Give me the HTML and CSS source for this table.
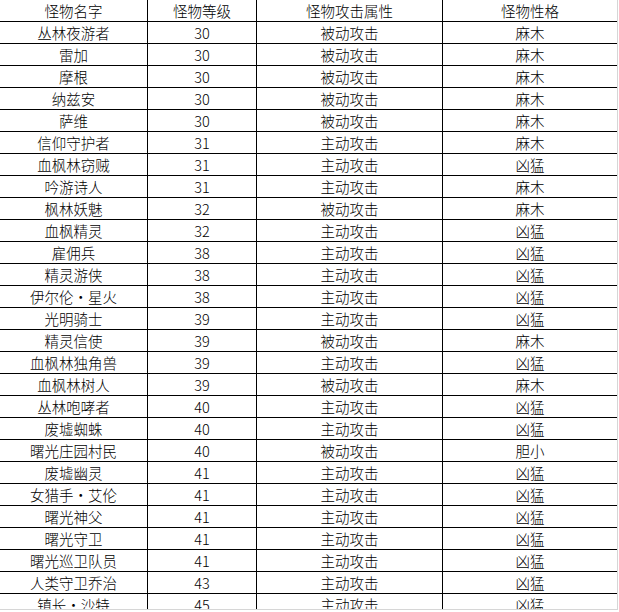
FILE: index.html
```html
<!DOCTYPE html>
<html lang="zh-CN">
<head>
<meta charset="utf-8">
<title>怪物列表</title>
<link rel="stylesheet" href="styles.css">
</head>
<body>
<div class="frame">
  <div class="grid">
    <div class="c">怪物名字</div><div class="c">怪物等级</div><div class="c">怪物攻击属性</div><div class="c last">怪物性格</div>
    <div class="c">丛林夜游者</div><div class="c">30</div><div class="c">被动攻击</div><div class="c last">麻木</div>
    <div class="c">雷加</div><div class="c">30</div><div class="c">被动攻击</div><div class="c last">麻木</div>
    <div class="c">摩根</div><div class="c">30</div><div class="c">被动攻击</div><div class="c last">麻木</div>
    <div class="c">纳兹安</div><div class="c">30</div><div class="c">被动攻击</div><div class="c last">麻木</div>
    <div class="c">萨维</div><div class="c">30</div><div class="c">被动攻击</div><div class="c last">麻木</div>
    <div class="c">信仰守护者</div><div class="c">31</div><div class="c">主动攻击</div><div class="c last">麻木</div>
    <div class="c">血枫林窃贼</div><div class="c">31</div><div class="c">主动攻击</div><div class="c last">凶猛</div>
    <div class="c">吟游诗人</div><div class="c">31</div><div class="c">主动攻击</div><div class="c last">麻木</div>
    <div class="c">枫林妖魅</div><div class="c">32</div><div class="c">被动攻击</div><div class="c last">麻木</div>
    <div class="c">血枫精灵</div><div class="c">32</div><div class="c">主动攻击</div><div class="c last">凶猛</div>
    <div class="c">雇佣兵</div><div class="c">38</div><div class="c">主动攻击</div><div class="c last">凶猛</div>
    <div class="c">精灵游侠</div><div class="c">38</div><div class="c">主动攻击</div><div class="c last">凶猛</div>
    <div class="c">伊尔伦・星火</div><div class="c">38</div><div class="c">主动攻击</div><div class="c last">凶猛</div>
    <div class="c">光明骑士</div><div class="c">39</div><div class="c">主动攻击</div><div class="c last">凶猛</div>
    <div class="c">精灵信使</div><div class="c">39</div><div class="c">被动攻击</div><div class="c last">麻木</div>
    <div class="c">血枫林独角兽</div><div class="c">39</div><div class="c">主动攻击</div><div class="c last">凶猛</div>
    <div class="c">血枫林树人</div><div class="c">39</div><div class="c">被动攻击</div><div class="c last">麻木</div>
    <div class="c">丛林咆哮者</div><div class="c">40</div><div class="c">主动攻击</div><div class="c last">凶猛</div>
    <div class="c">废墟蜘蛛</div><div class="c">40</div><div class="c">主动攻击</div><div class="c last">凶猛</div>
    <div class="c">曙光庄园村民</div><div class="c">40</div><div class="c">被动攻击</div><div class="c last">胆小</div>
    <div class="c">废墟幽灵</div><div class="c">41</div><div class="c">主动攻击</div><div class="c last">凶猛</div>
    <div class="c">女猎手・艾伦</div><div class="c">41</div><div class="c">主动攻击</div><div class="c last">凶猛</div>
    <div class="c">曙光神父</div><div class="c">41</div><div class="c">主动攻击</div><div class="c last">凶猛</div>
    <div class="c">曙光守卫</div><div class="c">41</div><div class="c">主动攻击</div><div class="c last">凶猛</div>
    <div class="c">曙光巡卫队员</div><div class="c">41</div><div class="c">主动攻击</div><div class="c last">凶猛</div>
    <div class="c">人类守卫乔治</div><div class="c">43</div><div class="c">主动攻击</div><div class="c last">凶猛</div>
    <div class="c">镇长・沙特</div><div class="c">45</div><div class="c">主动攻击</div><div class="c last">凶猛</div>
  </div>
</div>
</body>
</html>
```
FILE: styles.css
```css
html, body {
  margin: 0;
  padding: 0;
  background: #ffffff;
}
.frame {
  width: 617px;
  height: 609px;
  overflow: hidden;
  border-right: 1px solid #d6d6d6;
  border-bottom: 1px solid #d6d6d6;
}
.grid {
  display: grid;
  grid-template-columns: 148px 109px 186px 174px;
  grid-auto-rows: 22px;
  font-family: "Noto Sans CJK SC", "Liberation Sans", sans-serif;
  font-size: 14.5px;
  font-weight: 300;
  color: #000;
}
.c {
  box-sizing: border-box;
  border-right: 1px solid #000;
  border-bottom: 1px solid #000;
  text-align: center;
  line-height: 21px;
  white-space: nowrap;
}
.c.last {
  border-right: none;
}
```
